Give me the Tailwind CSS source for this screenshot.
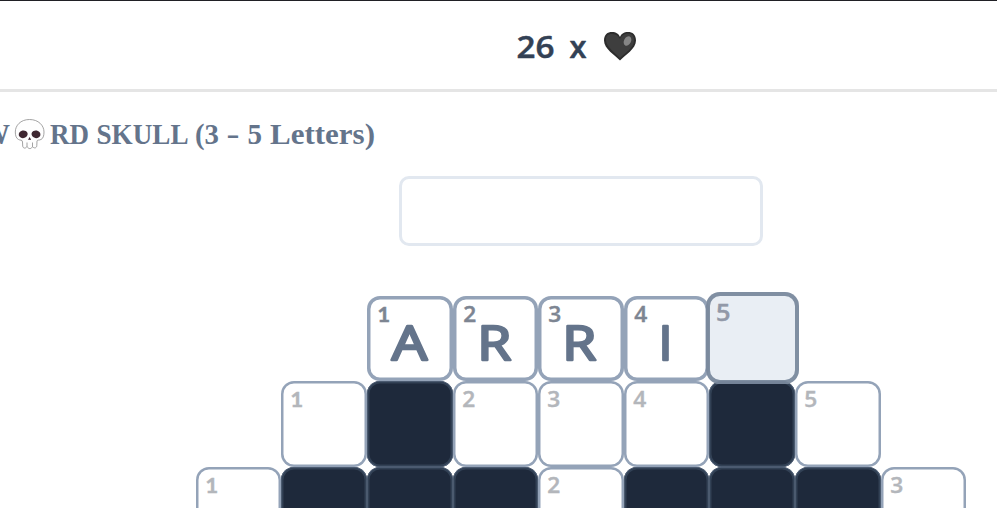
<!DOCTYPE html>
<html lang="en"><head><meta charset="utf-8"><title>Word Skull</title>
<script src="https://cdn.jsdelivr.net/npm/@tailwindcss/browser@4"></script></head>
<body class="w-[997px] h-[508px] overflow-hidden bg-white font-['Lato','Open_Sans',sans-serif]">
<header class="h-[92px] border-t border-t-[#202025] border-b-[3px] border-b-[#e5e5e5] bg-white pl-[510px]">
<svg class="block" width="140" height="88" viewBox="510 1 140 88" fill="#334155" stroke="#334155" stroke-width=".5" stroke-linejoin="round" font-family="Open Sans, sans-serif" font-weight="600" font-size="31">
<text x="516.500" y="58" textLength="38" lengthAdjust="spacingAndGlyphs">26</text>
<text x="569.500" y="57.800" textLength="17" lengthAdjust="spacingAndGlyphs" font-size="31">x</text>
<g stroke="none"><path d="M620 60.5C615 55 604 49 604 40.5C604 34.5 607.5 32 612 32C616 32 619 34 620 37C621 34 624 32 628 32C632.5 32 636 34.5 636 40.5C636 49 625 55 620 60.5Z" fill="#2c2c2c"/><path d="M620 58C615 53 606.5 47 606 40.5C605.7 36 608 34 612 34C616.500 34 619 37 620 39C621 36 624 33.500 628 33.500C632 33.500 634 36 634 40.500C634 48 625 53 620 58Z" fill="#3e3e3e"/><ellipse cx="627.5" cy="41" rx="3.5" ry="5" transform="rotate(27 627.5 41)" fill="#858585"/></g>
</svg></header>
<main>
<h1 class="pt-[18px]"><svg class="block" width="400" height="50" viewBox="0 110 400 50" fill="#64748b" font-family="Liberation Serif, serif" font-weight="700" font-size="30">
<text x="-19" y="144" textLength="29" lengthAdjust="spacingAndGlyphs">W</text>
<g stroke="#8b8b8b" stroke-width=".8" fill="#fefefe"><path d="M29.500 119.500C20.500 119.500 15.300 125.500 15.300 132C15.300 136 16.500 138.500 18.500 139.500C20 140.500 22.500 139.500 22.500 142L22.700 146C23 148.700 25.800 148.700 27 146.500C28.500 149.300 31.500 149.300 32.500 146.500C34 148.700 36.800 148.200 36.800 145.500L37 141C37.500 139.500 39 140.500 41 139.500C43 138.500 44 136 44 132C44 125.500 38.500 119.500 29.500 119.500Z"/><path d="M27 142.500V146.500M32.500 142.500V146.500"/></g>
<g fill="#3f2731"><ellipse cx="23.200" cy="134.300" rx="4.500" ry="3.800" transform="rotate(-12 23.200 134.300)"/><ellipse cx="36" cy="134.300" rx="4.500" ry="3.800" transform="rotate(12 36 134.300)"/><path d="M29.600 137L31 139.500Q31 140.200 29.600 139.800Q28.200 140.200 28.200 139.500Z"/></g>
<text x="50" y="144" textLength="39" lengthAdjust="spacingAndGlyphs">RD</text>
<text x="96.500" y="144" textLength="92" lengthAdjust="spacingAndGlyphs">SKULL</text>
<text x="195" y="144" textLength="24" lengthAdjust="spacingAndGlyphs">(3</text>
<text x="226.500" y="144" textLength="13" lengthAdjust="spacingAndGlyphs">-</text>
<text x="247.500" y="144" textLength="14.500" lengthAdjust="spacingAndGlyphs">5</text>
<text x="270" y="144" textLength="105" lengthAdjust="spacingAndGlyphs">Letters)</text>
</svg></h1>
<input aria-label="Answer" class="block mt-4 ml-[399px] w-[364px] h-[70px] rounded-[10px] border-[3px] border-[#e2e8f0] bg-white">
<section id="board" class="h-[263px] overflow-hidden -mt-[1px] pt-[50.6px] pl-[195.8px] grid grid-cols-[repeat(9,85.6px)] auto-rows-[85.5px]"></section>
</main>
<script>
// '#' is a blocked square, '.' is outside the shape, '*' is the selected square
const rows = ['..1234*..', '.1#234#5.', '1###2###3'];
const typed = {1: ['A', 24.8, 35.500], 2: ['R', 24.300, 34], 3: ['R', 24.300, 34], 4: ['I', 34.500, 14]};
let html = '';
rows.forEach((row, r) => [...row].forEach(c => {
  if (c === '.') html += '<div></div>';
  else if (c === '#') html += '<div class="bg-[#1e293b] rounded-[13px] shadow-[inset_0_0_0_0.5px_#64748b,inset_0_0_0_2.5px_#324155]"></div>';
  else if (c === '*') html += '<div class="relative z-10"><div class="absolute left-[-3px] top-[-4px] w-[92.500px] h-[92.500px] rounded-[14px] bg-[#e2e8f0]/75 shadow-[inset_0_0_0_4px_#64748bc8]"><svg class="block" width="92" height="92"><text x="10" y="28.500" font-size="23" font-family="Open Sans, sans-serif" font-weight="600" fill="#9299a8" stroke="#9299a8" stroke-width=".4" textLength="14.500" lengthAdjust="spacingAndGlyphs">5</text></svg></div></div>';
  else {
    const first = r === 0, L = typed[c];
    html += (first ? '<div class="bg-white rounded-[13px] shadow-[inset_0_0_0_3.5px_#94a3b8]">' : '<div class="bg-white rounded-[13px] shadow-[inset_0_0_0_2.5px_#94a3b8]">')
      + '<svg class="block" width="85" height="85"><text x="' + (first ? 10.300 : 9.300) + '" y="26" font-size="21.500" font-family="' + (c === '1' ? 'Lato' : 'Open Sans') + ', sans-serif" font-weight="' + (c !== '1' ? 600 : 700) + '" fill="' + (first ? '#7d8592' : '#b3b6bb') + '" stroke="' + (first ? '#7d8592' : '#b3b6bb') + '" stroke-width=".4" textLength="13" lengthAdjust="spacingAndGlyphs">' + c + '</text>'
      + (first ? '<text x="' + L[1] + '" y="64.300" font-size="47" font-weight="400" fill="#64748b" stroke="#64748b" stroke-width="2.400" stroke-linejoin="round" font-family="Open Sans, sans-serif" textLength="' + L[2] + '" lengthAdjust="spacingAndGlyphs">' + L[0] + '</text>' : '')
      + '</svg></div>';
  }
}));
document.getElementById('board').innerHTML = html;
</script>
</body></html>
